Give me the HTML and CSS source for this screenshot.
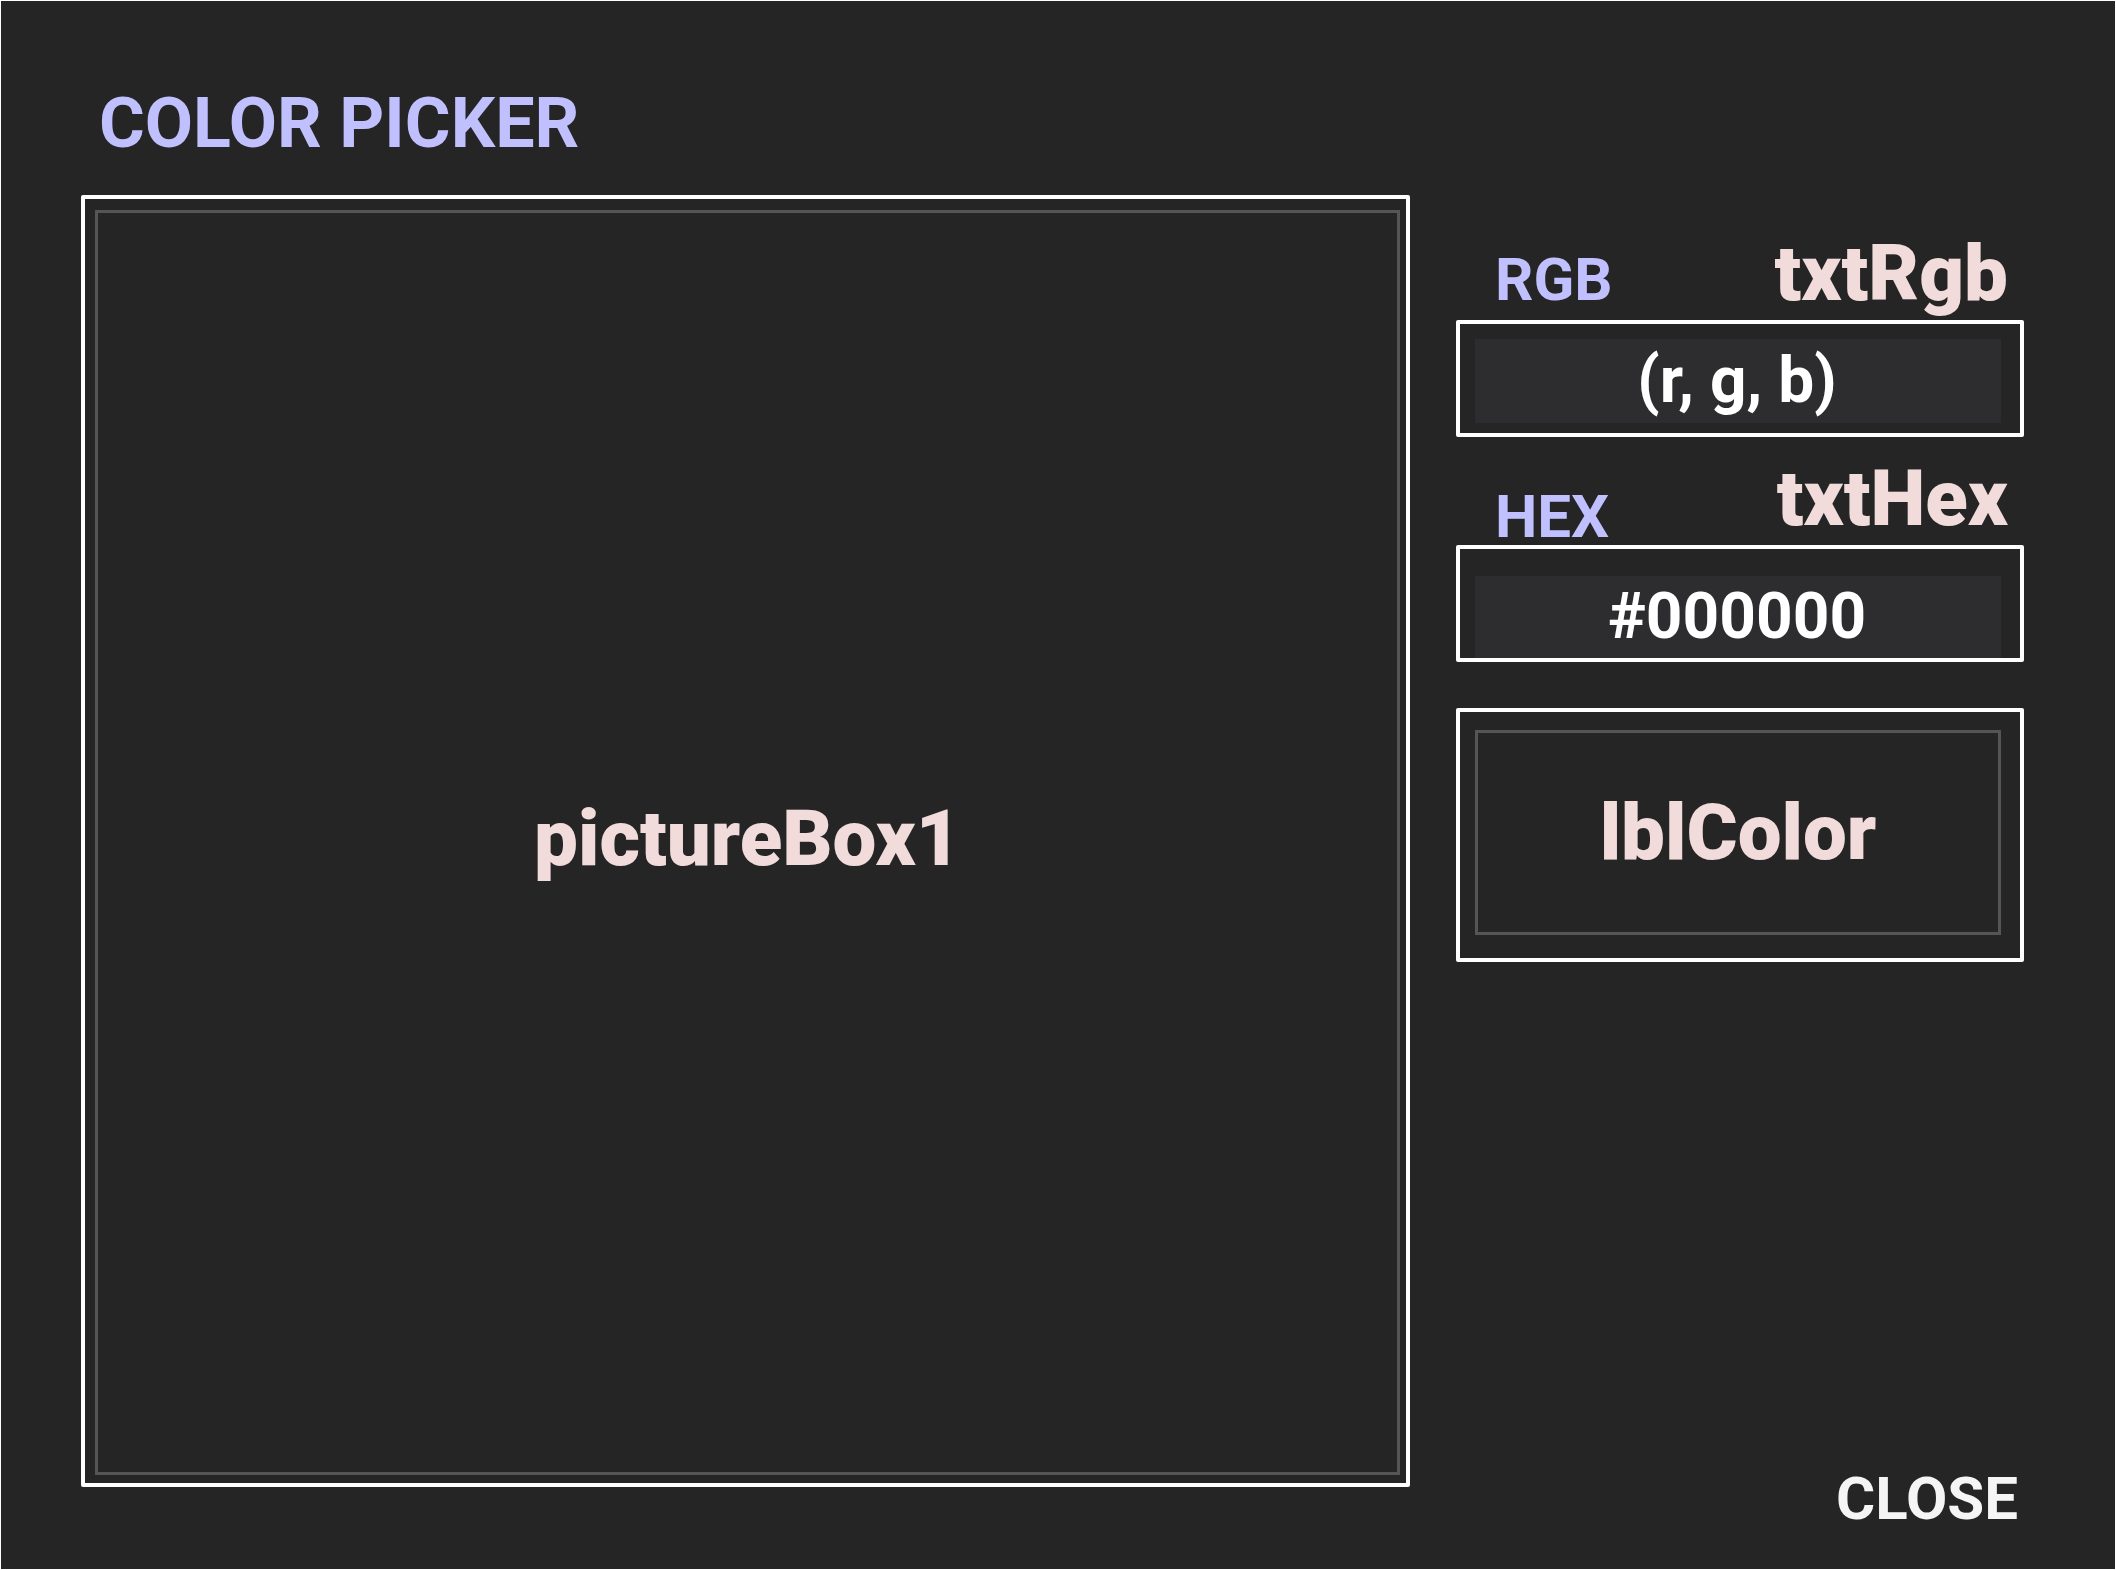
FILE: index.html
```html
<!DOCTYPE html>
<html lang="en">
<head>
    <meta charset="UTF-8">
    <meta name="viewport" content="width=device-width, initial-scale=1.0">
    <title>Color Picker</title>
    <link rel="stylesheet" href="styles.css">
</head>
<body>
    <main class="window">
        <h1>COLOR PICKER</h1>
        <div class="content">
            <div class="control picture">
                <div class="frame">pictureBox1</div>
            </div>
            <form class="panel">
                <div class="heading heading-rgb">
                    <label for="rgb">RGB</label>
                    <span class="name">txtRgb</span>
                </div>
                <div class="control field-rgb">
                    <input type="text" id="rgb" value="(r, g, b)">
                </div>
                <div class="heading heading-hex">
                    <label for="hex">HEX</label>
                    <span class="name">txtHex</span>
                </div>
                <div class="control field-hex">
                    <input type="text" id="hex" value="#000000">
                </div>
                <div class="control swatch">
                    <div class="frame">lblColor</div>
                </div>
                <button type="button" class="close">CLOSE</button>
            </form>
        </div>
    </main>
</body>
</html>
```
FILE: styles.css
```css
* {
    box-sizing: border-box;
}

body {
    margin: 0;
    background-color: #252525;
    font-family: Roboto, sans-serif;
}

.window {
    display: flex;
    flex-direction: column;
    min-height: 100vh;
    padding: 82px 91px 42px 80px;
    border: 1px solid #ffffff;
}

h1 {
    margin: 0 0 32px;
    padding-left: 18px;
    font-size: 70px;
    line-height: 80px;
    font-weight: bold;
    color: #c0c0ff;
}

.content {
    flex: 1;
    display: grid;
    grid-template-columns: 1329fr 568fr;
    gap: 46px;
}

.control {
    border: 4px solid #ffffff;
    border-radius: 2px;
}

.frame {
    display: flex;
    align-items: center;
    justify-content: center;
    width: 100%;
    border: 3px solid #555555;
    font-size: 78px;
    line-height: 80px;
    font-weight: 900;
    color: #f2dcdb;
}

.picture {
    display: flex;
    margin-bottom: 40px;
    padding: 11px 6px 8px 10px;
}

.picture .frame {
    padding-bottom: 8px;
}

.panel {
    display: flex;
    flex-direction: column;
}

.heading {
    display: flex;
    align-items: flex-end;
    justify-content: space-between;
    padding: 0 16px 0 39px;
}

.heading-rgb {
    height: 125px;
}

.heading-hex {
    height: 108px;
}

label {
    font-size: 60px;
    line-height: 56px;
    font-weight: bold;
    color: #c0c0ff;
}

.heading-rgb label {
    margin-bottom: 12px;
}

.name {
    margin-bottom: 6px;
    font-size: 78px;
    line-height: 80px;
    font-weight: 900;
    color: #f2dcdb;
}

.field-rgb {
    padding: 15px 19px 10px 15px;
}

.field-hex {
    padding: 27px 19px 0 15px;
}

input {
    display: block;
    width: 100%;
    height: 84px;
    padding: 0 2px 2px 0;
    border: none;
    background-color: #2d2d2f;
    font: bold 64px/76px Roboto, sans-serif;
    color: #ffffff;
    text-align: center;
}

.field-hex input {
    height: 82px;
}

.swatch {
    display: flex;
    height: 254px;
    margin-top: 46px;
    padding: 18px 19px 23px 15px;
}

.close {
    align-self: flex-end;
    margin-top: auto;
    margin-right: 6px;
    padding: 0;
    border: none;
    background: none;
    font: bold 60px/56px Roboto, sans-serif;
    color: #f5f5f5;
    cursor: pointer;
}
```
